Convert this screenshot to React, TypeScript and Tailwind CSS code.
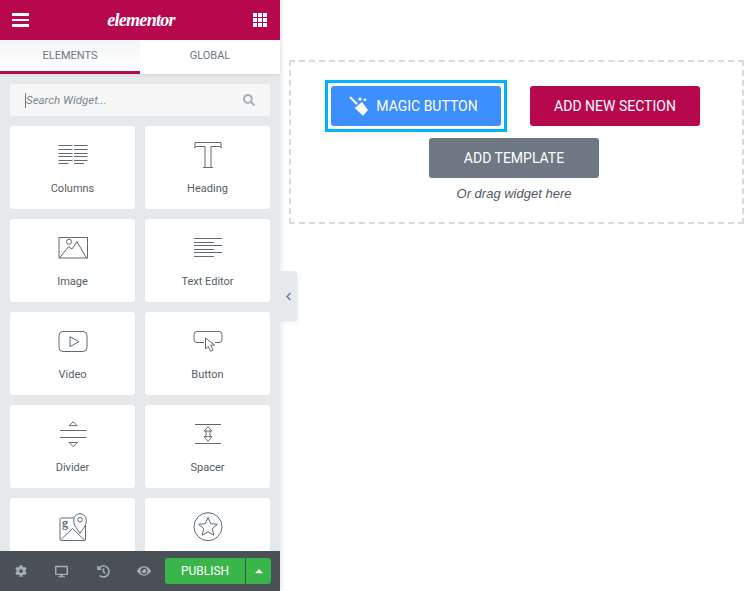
import { ReactNode } from "react";
import { FaCaretUp, FaChevronLeft, FaCog, FaDesktop, FaEye, FaHistory, FaSearch } from "react-icons/fa";

const stroke = "#5f6a73";

function Icon({ children }: { children: ReactNode }) {
  return (
    <svg width="40" height="40" viewBox="0 0 40 40" fill="none" stroke={stroke} strokeWidth="1" className="shrink-0">
      {children}
    </svg>
  );
}

// the last two cards have their labels hidden behind the footer
const widgets: { id: string; label?: string; icon: ReactNode }[] = [
  {
    id: "columns",
    label: "Columns",
    icon: (
      <Icon>
        <path d="M5.500 5.500h14M21 5.500h13.500M5.500 9.500h14M21 9.500h13.500M5.500 13.500h14M21 13.500h13.500M5.500 16.500h14M21 16.500h13.500M5.500 20.500h14M21 20.500h13.500M5.500 23.500h10M21 23.500h10" />
      </Icon>
    ),
  },
  {
    id: "heading",
    label: "Heading",
    icon: (
      <Icon>
        <path d="M7 8V2.500h26V8c0-1-1-1.500-2-1.500h-8v21h-6v-21H9C8 6.500 7 7 7 8Z" />
        <path d="M15 27.500h10" />
      </Icon>
    ),
  },
  {
    id: "image",
    label: "Image",
    icon: (
      <Icon>
        <rect x="6" y="4.500" width="28.500" height="20.500" />
        <circle cx="16" cy="8.700" r="2.500" />
        <path d="M6.500 25l9-11.300 3.500 2.300 5-7.300L33.500 25" />
      </Icon>
    ),
  },
  {
    id: "text-editor",
    label: "Text Editor",
    icon: (
      <Icon>
        <path d="M6 5.500h28M6 9.500h20M6 12.500h28M6 16.500h20M6 19.500h28M6 23.500h20" />
      </Icon>
    ),
  },
  {
    id: "video",
    label: "Video",
    icon: (
      <Icon>
        <rect x="6" y="5.500" width="28" height="20" rx="4" />
        <path d="M17 10.700v10l9-5z" />
      </Icon>
    ),
  },
  {
    id: "button",
    label: "Button",
    icon: (
      <Icon>
        <path d="M16 16.500H9a3 3 0 0 1-3-3v-5a3 3 0 0 1 3-3h22a3 3 0 0 1 3 3v5a3 3 0 0 1-3 3h-4" />
        <path d="M17.500 12v11l2.700-2.700 2.300 5 2.500-1.200-2.300-5h4z" />
      </Icon>
    ),
  },
  {
    id: "divider",
    label: "Divider",
    icon: (
      <Icon>
        <path d="M16.200 6.700l4-4 4 4zM7 11.500h26.500M7 18.500h26.500M16.200 23.500l4 4.200 4-4.200z" />
      </Icon>
    ),
  },
  {
    id: "spacer",
    label: "Spacer",
    icon: (
      <Icon>
        <path d="M7 5.500h26M7 24.500h26M16 12l4-4.300 4 4.300zM16 17.700l4 4.600 4-4.600zM18 12v5.700M22 12v5.700" />
      </Icon>
    ),
  },
  {
    id: "maps",
    icon: (
      <Icon>
        <path d="M21 6H8.500a1.500 1.500 0 0 0-1.500 1.500V27a1.500 1.500 0 0 0 1.500 1.500H31a1.500 1.500 0 0 0 1.500-1.500V13" />
        <path d="M7.500 28L19.500 16.500 31.500 28" />
        <path d="M27 21.500c-2-4-6.300-7-6.300-13.500a6.300 6.300 0 0 1 12.600 0c0 6.500-4.300 9.500-6.300 13.500Z" fill="#fff" />
        <circle cx="27" cy="7.700" r="2.300" />
        <text x="9" y="15" fontFamily="Liberation Serif, serif" fontWeight="700" fontSize="12" fill={stroke} stroke="none">
          g
        </text>
      </Icon>
    ),
  },
  {
    id: "star",
    icon: (
      <Icon>
        <circle cx="20" cy="14.700" r="14" />
        <path d="M20 5.500l2.700 6.200 6.600.6-5 4.400 1.500 6.600-5.800-3.500-5.800 3.500 1.500-6.600-5-4.400 6.600-.6z" />
      </Icon>
    ),
  },
];

function WidgetCard({ label, icon }: { label?: string; icon: ReactNode }) {
  return (
    <div className="flex h-[83px] flex-col items-center rounded-[3px] bg-white pt-[14px]">
      {icon}
      {label && (
        <span className="mt-[2px] text-[11px] leading-[14px] text-[#556068] [font-family:Roboto,sans-serif]">{label}</span>
      )}
    </div>
  );
}

function ActionButton({ bg, children }: { bg: string; children: ReactNode }) {
  return (
    <button
      type="button"
      className={`flex h-[40px] w-[170px] items-center justify-center rounded-[3px] text-[14px] text-white [font-family:Roboto,sans-serif] ${bg}`}
    >
      {children}
    </button>
  );
}

export default function App() {
  return (
    <div className="relative flex h-[591px] w-[750px] overflow-hidden bg-white [font-family:Roboto,sans-serif]">
      {/* sidebar */}
      <aside className="flex h-full w-[280px] shrink-0 flex-col bg-[#e6e9ec] shadow-[2px_0_4px_rgba(0,0,0,0.08)]">
        <header className="flex h-[40px] shrink-0 items-center justify-between bg-[#b7084e] pl-[12px] pr-[13px]">
          <div className="flex w-[17px] flex-col gap-[3px]">
            <span className="h-[2.500px] bg-white" />
            <span className="h-[2.500px] bg-white" />
            <span className="h-[2.500px] bg-white" />
          </div>
          <span className="text-[18px] leading-none font-bold tracking-[-0.7px] text-white italic [font-family:'Liberation_Serif',serif]">
            elementor
          </span>
          <svg width="14" height="14" viewBox="0 0 14 14" fill="#fff">
            <rect x="0" y="0" width="4" height="4" />
            <rect x="5" y="0" width="4" height="4" />
            <rect x="10" y="0" width="4" height="4" />
            <rect x="0" y="5" width="4" height="4" />
            <rect x="5" y="5" width="4" height="4" />
            <rect x="10" y="5" width="4" height="4" />
            <rect x="0" y="10" width="4" height="4" />
            <rect x="5" y="10" width="4" height="4" />
            <rect x="10" y="10" width="4" height="4" />
          </svg>
        </header>

        <div className="flex h-[34px] shrink-0 text-[11px] text-[#6d7882] shadow-[0_2px_4px_rgba(0,0,0,0.06)]">
          <div className="flex w-[140px] items-center justify-center border-b-[3px] border-[#b7084e] bg-gradient-to-b from-[#f4f5f6] to-white pt-[2px]">
            ELEMENTS
          </div>
          <div className="flex w-[140px] items-center justify-center bg-white pb-[1px]">GLOBAL</div>
        </div>

        <div className="flex min-h-0 flex-1 flex-col overflow-hidden px-[10px] pt-[10px]">
          <div className="flex h-[32px] shrink-0 items-center justify-between bg-[#f7f7f7] pl-[15px] pr-[15px]">
            <span className="border-l border-[#6d7882] text-[11.500px] leading-[15px] text-[#7a8790] italic">
              Search Widget...
            </span>
            <FaSearch className="h-[12px] w-[12px] text-[#a4afb7]" />
          </div>
          <div className="mt-[10px] grid shrink-0 grid-cols-2 gap-[10px]">
            {widgets.map((w) => (
              <WidgetCard key={w.id} label={w.label} icon={w.icon} />
            ))}
          </div>
        </div>

        <footer className="relative flex h-[40px] shrink-0 items-center bg-[#495157] pl-[15px] text-[#a4afb7]">
          <FaCog className="h-[12px] w-[12px]" />
          <FaDesktop className="ml-[28px] h-[13px] w-[13px]" />
          <FaHistory className="ml-[29px] h-[13px] w-[13px]" />
          <FaEye className="ml-[27px] h-[14px] w-[14px]" />
          <div className="ml-[14px] flex h-[26px] text-[12px] text-white">
            <div className="flex w-[80px] items-center justify-center rounded-l-[3px] bg-[#39b54a]">PUBLISH</div>
            <div className="ml-[1px] flex w-[25px] items-center justify-center rounded-r-[3px] bg-[#39b54a]">
              <FaCaretUp className="h-[12px] w-[12px]" />
            </div>
          </div>
        </footer>
      </aside>

      {/* collapse handle */}
      <div className="absolute top-[271px] left-[280px] flex h-[50px] w-[17px] items-center justify-center rounded-r-[3px] bg-[#e6e9ec] text-[#6d7882] shadow-[2px_2px_3px_rgba(0,0,0,0.05)]">
        <FaChevronLeft className="h-[9px] w-[9px]" />
      </div>

      {/* canvas */}
      <main className="min-w-0 flex-1 pt-[60px] pr-[6px] pl-[9px]">
        <div className="h-[164px] border-2 border-dashed border-[#d5dadf] pt-[18px]">
          <div className="flex items-center pl-[34px]">
            <div className="border-[3px] border-[#00b4ff] p-[3px]">
              <ActionButton bg="bg-[#3d8eff]">
                <svg width="22" height="22" viewBox="0 0 22 22" fill="#fff" className="mr-[6px] -ml-[6px]">
                  <path d="M2.800 1.200L10 8.400 8.400 10 1.200 2.800z" />
                  <path d="M14 7l6 8-5 5.700-8.300-7.700z" />
                  <path d="M12 2l1 1.500L14.500 4 13 5l-1 1.500L11 5 9.500 4 11 3.500zM17 3l.7 1 1 .7-1 .7-.7 1-.7-1-1-.7 1-.7z" />
                </svg>
                MAGIC BUTTON
              </ActionButton>
            </div>
            <div className="ml-[23px]">
              <ActionButton bg="bg-[#b7084e]">ADD NEW SECTION</ActionButton>
            </div>
          </div>
          <div className="mt-[6px] ml-[138px]">
            <ActionButton bg="bg-[#6d7882]">ADD TEMPLATE</ActionButton>
          </div>
          <p className="mt-[8px] ml-[-5px] text-center text-[13px] leading-[16px] text-[#54595f] italic [font-family:'Liberation_Sans',Arial,sans-serif]">
            Or drag widget here
          </p>
        </div>
      </main>
    </div>
  );
}
